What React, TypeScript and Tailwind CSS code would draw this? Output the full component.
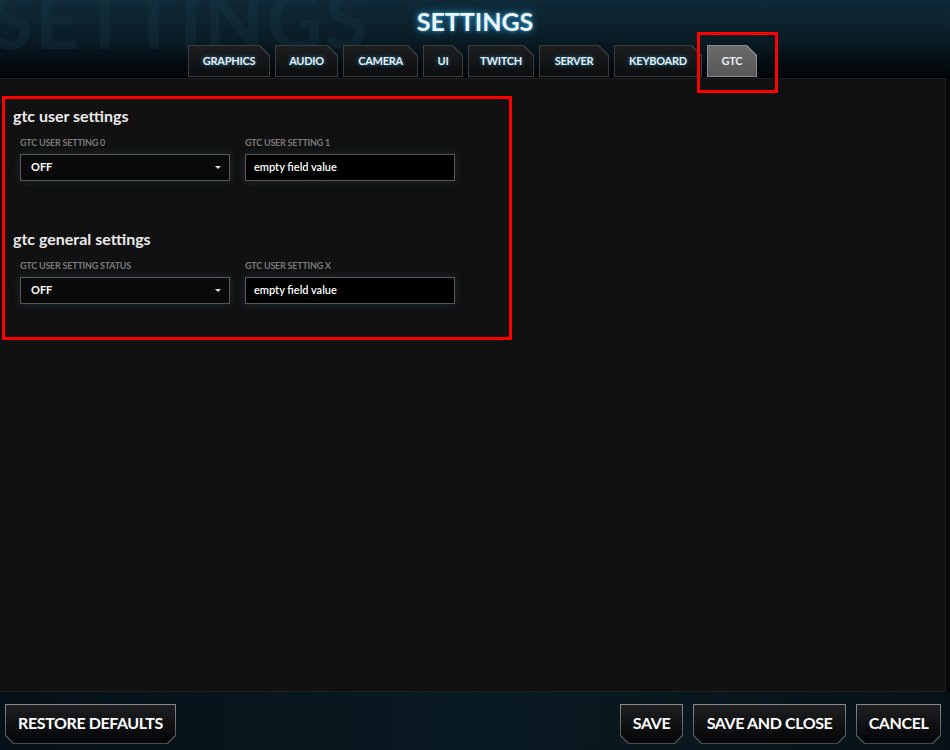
import React from 'react';

const tabs = [
  { label: 'GRAPHICS', w: 'w-[82px]' },
  { label: 'AUDIO', w: 'w-[63px]' },
  { label: 'CAMERA', w: 'w-[75px]' },
  { label: 'UI', w: 'w-[40px]' },
  { label: 'TWITCH', w: 'w-[66px]' },
  { label: 'SERVER', w: 'w-[70px]' },
  { label: 'KEYBOARD', w: 'w-[88px]' },
  { label: 'GTC', w: 'w-[50px]', active: true },
];

function Tab({ label, w, active }: { label: string; w: string; active?: boolean }) {
  return (
    <div
      className={`${w} h-[32px] p-[1px] [clip-path:polygon(0_0,calc(100%-10px)_0,100%_10px,100%_100%,0_100%)] ${
        active ? 'bg-[#8a8a8a]' : 'bg-[#3a3d40]'
      }`}
    >
      <div
        className={`h-full w-full flex items-center justify-center text-[11px] font-bold tracking-tight [clip-path:polygon(0_0,calc(100%-10px)_0,100%_10px,100%_100%,0_100%)] ${
          active
            ? 'bg-gradient-to-b from-[#6a6a6a] to-[#585858] text-[#e8eef2]'
            : 'bg-gradient-to-b from-[#1c1e20] to-[#0c0d0e] text-[#e6eef2] [text-shadow:0_0_4px_#2a8ab8]'
        }`}
      >
        {label}
      </div>
    </div>
  );
}

function Button({ label, w }: { label: string; w: string }) {
  return (
    <div
      className={`${w} h-[40px] p-[1px] bg-gradient-to-b from-[#8a8a8a] to-[#4a4a4a] [clip-path:polygon(0_0,100%_0,100%_calc(100%-8px),calc(100%-8px)_100%,8px_100%,0_calc(100%-8px))]`}
    >
      <div className="h-full w-full flex items-center justify-center pb-[2px] bg-gradient-to-b from-[#1d1f21] to-[#050607] text-white text-[16px] font-bold tracking-tight [clip-path:polygon(0_0,100%_0,100%_calc(100%-8px),calc(100%-8px)_100%,8px_100%,0_calc(100%-8px))]">
        {label}
      </div>
    </div>
  );
}

function SelectField({ label }: { label: string }) {
  return (
    <div className="w-[210px] flex flex-col">
      <div className="text-[9px] font-bold text-[#7a7a7a] tracking-tight h-[11px] leading-[11px] mb-[6px]">{label}</div>
      <div className="h-[27px] border border-[#585858] bg-[#0a0a0a] shadow-[0_0_8px_rgba(60,120,150,0.25)] flex items-center justify-between pl-[10px] pr-[8px]">
        <span className="text-[11px] font-bold text-white">OFF</span>
        <span className="w-0 h-0 border-l-[3px] border-r-[3px] border-t-[3px] border-l-transparent border-r-transparent border-t-[#dddddd]" />
      </div>
    </div>
  );
}

function TextField({ label }: { label: string }) {
  return (
    <div className="w-[210px] flex flex-col">
      <div className="text-[9px] font-bold text-[#7a7a7a] tracking-tight h-[11px] leading-[11px] mb-[6px]">{label}</div>
      <div className="h-[27px] border border-[#585858] bg-black shadow-[0_0_8px_rgba(60,120,150,0.25)] flex items-center pl-[8px]">
        <span className="text-[11px] font-semibold text-white">empty field value</span>
      </div>
    </div>
  );
}

function Section({ title, left, right }: { title: string; left: string; right: string }) {
  return (
    <div className="flex flex-col">
      <h2 className="text-[16px] font-bold text-[#ececec] leading-[20px] pl-[13px]">{title}</h2>
      <div className="flex gap-[15px] pl-[20px] mt-[11px]">
        <SelectField label={left} />
        <TextField label={right} />
      </div>
    </div>
  );
}

export default function App() {
  return (
    <div
      className="relative w-[950px] h-[750px] overflow-hidden bg-[#04080b] flex flex-col"
      style={{ fontFamily: 'Lato, "Open Sans", sans-serif' }}
    >
      {/* header */}
      <div className="relative h-[78px] bg-gradient-to-b from-[#102a38] via-[#0a1c26] to-[#020507] flex flex-col items-center">
        <div className="absolute left-[-10px] top-[-6px] h-[50px] text-[78px] font-bold text-[#1a3a4a] opacity-30 leading-[50px] tracking-wide pointer-events-none select-none">
          SETTINGS
        </div>
        <div className="relative mt-[5px] h-[34px] flex items-center text-[25px] font-bold text-[#eef6fa] [text-shadow:0_0_8px_#2e9ad0,0_0_3px_#2e9ad0]">
          SETTINGS
        </div>
        <div className="relative mt-[6px] flex gap-[5px] pr-[5px]">
          {tabs.map((t) => (
            <Tab key={t.label} {...t} />
          ))}
        </div>
      </div>

      {/* main panel */}
      <div className="h-[614px] w-[946px] bg-[#111111] border-t border-r border-b border-[#1f1f1f] flex flex-col pt-[27px]">
        <Section title="gtc user settings" left="GTC USER SETTING 0" right="GTC USER SETTING 1" />
        <div className="h-[48px]" />
        <Section title="gtc general settings" left="GTC USER SETTING STATUS" right="GTC USER SETTING X" />
      </div>

      {/* footer */}
      <div className="flex-1 bg-gradient-to-r from-[#061018] via-[#0a1a22] to-[#071218] flex items-start justify-between px-[5px] pt-[12px]">
        <Button label="RESTORE DEFAULTS" w="w-[171px]" />
        <div className="flex gap-[10px] pr-[4px]">
          <Button label="SAVE" w="w-[63px]" />
          <Button label="SAVE AND CLOSE" w="w-[153px]" />
          <Button label="CANCEL" w="w-[85px]" />
        </div>
      </div>

      {/* annotation boxes */}
      <div className="absolute left-[2px] top-[96px] w-[510px] h-[244px] border-[3px] border-[#ff0000] pointer-events-none" />
      <div className="absolute left-[697px] top-[32px] w-[81px] h-[61px] border-[3px] border-[#ff0000] pointer-events-none" />
    </div>
  );
}
